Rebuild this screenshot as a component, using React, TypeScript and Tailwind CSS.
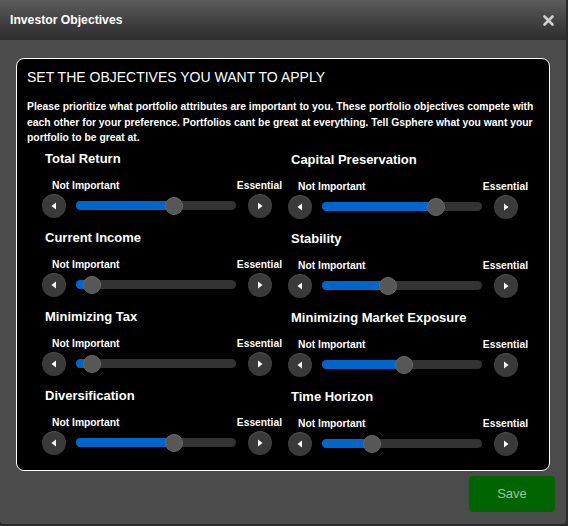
import React from "react";

type Objective = { title: string; value: number };

const LEFT: Objective[] = [
  { title: "Total Return", value: 0.61 },
  { title: "Current Income", value: 0.1 },
  { title: "Minimizing Tax", value: 0.1 },
  { title: "Diversification", value: 0.61 },
];

const RIGHT: Objective[] = [
  { title: "Capital Preservation", value: 0.71 },
  { title: "Stability", value: 0.41 },
  { title: "Minimizing Market Exposure", value: 0.51 },
  { title: "Time Horizon", value: 0.31 },
];

function StepButton({ dir }: { dir: "left" | "right" }) {
  return (
    <button
      type="button"
      className="flex h-6 w-6 shrink-0 items-center justify-center rounded-full bg-[#3a3a3a] shadow-[inset_0_1px_1px_rgba(255,255,255,0.12)]"
    >
      <svg width="8" height="8" viewBox="0 0 8 8">
        {dir === "left" ? (
          <polygon points="6,0.5 6,7.5 1.5,4" fill="#fff" />
        ) : (
          <polygon points="2,0.5 2,7.5 6.5,4" fill="#fff" />
        )}
      </svg>
    </button>
  );
}

function ObjectiveSlider({ title, value }: Objective) {
  return (
    <div className="w-[240px]">
      <div className="pl-[3px] text-[13px] font-bold leading-[17px] text-white">{title}</div>
      <div className="mt-[12px] flex items-center justify-between pl-[10px] text-[10.3px] font-bold leading-[13px] text-white">
        <span>Not Important</span>
        <span>Essential</span>
      </div>
      <div className="mt-[2px] flex h-6 items-center">
        <StepButton dir="left" />
        <div className="relative ml-[10px] h-[9px] w-[160px] rounded-full bg-[#333333]">
          <div
            className="h-full rounded-full bg-[#0066cc]"
            style={{ width: `${value * 100}%` }}
          />
          <div
            className="absolute top-1/2 h-[18px] w-[18px] -translate-x-1/2 -translate-y-1/2 rounded-full border border-[#6a6a6a] bg-[#575757]"
            style={{ left: `${value * 100}%` }}
          />
        </div>
        <div className="ml-[12px]">
          <StepButton dir="right" />
        </div>
      </div>
    </div>
  );
}

export default function App() {
  return (
    <div
      className="h-[526px] w-[568px] bg-[#2a2a2a]"
      style={{ fontFamily: '"Liberation Sans", Arial, sans-serif' }}
    >
      <div className="flex h-[524px] w-[566px] flex-col overflow-hidden rounded-b-[4px] bg-[#4b4b4b]">
        <header className="flex h-10 shrink-0 items-center justify-between bg-gradient-to-b from-[#5c5c5c] to-[#2c2c2c] pl-[10px] pr-[12px]">
          <span className="text-[12.2px] font-bold text-white">Investor Objectives</span>
          <svg width="11" height="11" viewBox="0 0 11 11">
            <path d="M1.5 1.5 L9.5 9.5 M9.5 1.5 L1.5 9.5" stroke="#cfcfcf" strokeWidth="2.6" strokeLinecap="round" />
          </svg>
        </header>

        <div className="mx-[16px] mt-[18px] h-[413px] rounded-[8px] border border-white bg-black px-[10px] pt-[9px]">
          <h2 className="text-[14px] leading-[18px] text-white">SET THE OBJECTIVES YOU WANT TO APPLY</h2>
          <p className="mt-[13px] text-[10.35px] font-bold leading-[15.5px] text-white">
            Please prioritize what portfolio attributes are important to you. These portfolio objectives compete with
            each other for your preference. Portfolios cant be great at everything. Tell Gsphere what you want your
            portfolio to be great at.
          </p>
          <div className="mt-[4px] flex gap-[6px] pl-[15px]">
            <div className="flex flex-col gap-[11px]">
              {LEFT.map((o) => (
                <ObjectiveSlider key={o.title} {...o} />
              ))}
            </div>
            <div className="mt-[1px] flex flex-col gap-[11px]">
              {RIGHT.map((o) => (
                <ObjectiveSlider key={o.title} {...o} />
              ))}
            </div>
          </div>
        </div>

        <div className="flex justify-end pr-[11px] pt-[5px]">
          <button
            type="button"
            className="h-[36px] w-[86px] rounded-[4px] bg-[#006400] text-[13px] text-[#9fc49f]"
          >
            Save
          </button>
        </div>
      </div>
    </div>
  );
}
